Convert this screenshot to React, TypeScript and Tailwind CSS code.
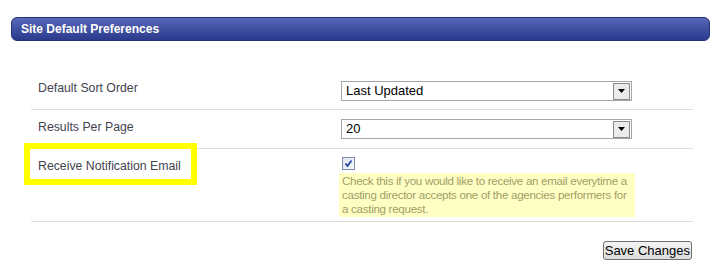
import React from 'react';

const SelectBox: React.FC<{ value: string }> = ({ value }) => (
  <div className="w-[291px] h-[20px] border border-[#a5a5a5] bg-white flex items-center justify-between pl-[4px] pr-[1px]">
    <span className="text-[13px] leading-[16px] text-black">{value}</span>
    <div className="w-[17px] h-[17px] border border-[#8a8a8a] bg-[#ebebeb] flex items-center justify-center">
      <svg width="7" height="4" viewBox="0 0 7 4">
        <polygon points="0,0 7,0 3.5,4" fill="#000" />
      </svg>
    </div>
  </div>
);

const App: React.FC = () => {
  return (
    <div className="w-[723px] h-[280px] bg-white pt-[17px] relative font-['Liberation_Sans',Arial,sans-serif]">
      <div className="ml-[11px] w-[699px] h-[24px] rounded-[6px] border border-[#24327e] bg-gradient-to-b from-[#5867b8] to-[#2b3a8c] flex items-center pl-[9px]">
        <span className="text-white font-bold text-[12px] leading-none">Site Default Preferences</span>
      </div>

      <div className="ml-[31px] w-[662px] mt-[30px] text-[12.3px] text-[#43434f]">
        <div className="grid grid-cols-[310px_1fr] h-[39px] border-b border-[#dddddd]">
          <div className="pl-[7px] pt-[9px] leading-[16px]">Default Sort Order</div>
          <div className="pt-[10px]">
            <SelectBox value="Last Updated" />
          </div>
        </div>
        <div className="grid grid-cols-[310px_1fr] h-[39px] border-b border-[#dddddd]">
          <div className="pl-[7px] pt-[9px] leading-[16px]">Results Per Page</div>
          <div className="pt-[9px]">
            <SelectBox value="20" />
          </div>
        </div>
        <div className="grid grid-cols-[310px_1fr] h-[73px] border-b border-[#dddddd]">
          <div className="pl-[7px] pt-[9px] leading-[16px]">Receive Notification Email</div>
          <div className="pt-[8px] pl-[1px]">
            <div className="w-[13px] h-[13px] border border-[#7f8fb0] bg-gradient-to-br from-[#dfe3ec] to-[#f7f8fb] flex items-center justify-center">
              <svg width="9" height="9" viewBox="0 0 9 9">
                <path d="M1.5 4.5 L3.5 7 L7.5 1.5" stroke="#2347a8" strokeWidth="1.8" fill="none" />
              </svg>
            </div>
            <div className="mt-[3px] -ml-[3px] w-[296px] bg-[#ffffc4] pl-[3px] py-[1px] text-[11.6px] tracking-[-0.3px] leading-[14px] text-[#a29d68] whitespace-nowrap">
              Check this if you would like to receive an email everytime a<br />
              casting director accepts one of the agencies performers for<br />
              a casting request.
            </div>
          </div>
        </div>
      </div>

      <div className="w-[692px] flex justify-end mt-[19px]">
        <button className="h-[19px] px-[1px] border border-[#707070] rounded-[3px] bg-gradient-to-b from-[#f4f4f4] to-[#dcdcdc] text-[13px] leading-[16px] text-black">
          Save Changes
        </button>
      </div>

      <div className="absolute left-[24px] top-[143px] w-[173px] h-[42px] border-[6px] border-[#ffff00] pointer-events-none" />
    </div>
  );
};

export default App;
